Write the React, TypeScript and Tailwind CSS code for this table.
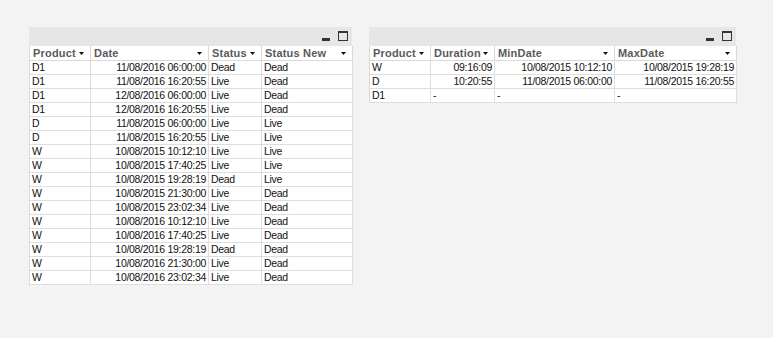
import React from "react";

const font = { fontFamily: '"Liberation Sans", Arial, sans-serif' };

function Arrow() {
  return (
    <svg width="5" height="3" viewBox="0 0 5 3" className="shrink-0">
      <path d="M0 0H5L2.5 3Z" fill="#111" />
    </svg>
  );
}

function Caption() {
  return (
    <div className="h-[19px] bg-[#e6e6e6] flex items-end justify-end gap-[8px] pr-[4px] pb-[4px]">
      <div className="w-[8px] h-[3px] bg-[#333] mb-[1px]" />
      <div className="w-[10px] h-[10px] border border-[#333] border-t-[2px] bg-transparent mb-[1px]" />
    </div>
  );
}

type Col = { title: string; align: "left" | "right" };

function Table({ cols, widths, rows }: { cols: Col[]; widths: string; rows: string[][] }) {
  return (
    <div className="flex flex-col" style={font}>
      <Caption />
      <div className={`grid ${widths} bg-white border-l border-[#d9d9d9]`}>
        {cols.map((c, i) => (
          <div
            key={"h" + i}
            className="h-[15px] border-r border-b border-[#d9d9d9] flex items-center justify-between pl-[3px] pr-[6px] text-[11px] font-bold tracking-[0.2px] text-[#5a5a5a] leading-none"
          >
            <span>{c.title}</span>
            <Arrow />
          </div>
        ))}
        {rows.map((r, ri) =>
          r.map((v, ci) => {
            const isDash = v === "-";
            const right = cols[ci].align === "right" && !isDash;
            return (
              <div
                key={ri + "-" + ci}
                className={`h-[14px] border-r border-b border-[#dedede] flex items-center px-[2px] text-[10.5px] tracking-[-0.3px] text-[#111] leading-none whitespace-nowrap ${
                  right ? "justify-end" : "justify-start"
                }`}
              >
                {v}
              </div>
            );
          })
        )}
      </div>
    </div>
  );
}

const leftRows = [
  ["D1", "11/08/2016 06:00:00", "Dead", "Dead"],
  ["D1", "11/08/2016 16:20:55", "Live", "Dead"],
  ["D1", "12/08/2016 06:00:00", "Live", "Dead"],
  ["D1", "12/08/2016 16:20:55", "Live", "Dead"],
  ["D", "11/08/2015 06:00:00", "Live", "Live"],
  ["D", "11/08/2015 16:20:55", "Live", "Live"],
  ["W", "10/08/2015 10:12:10", "Live", "Live"],
  ["W", "10/08/2015 17:40:25", "Live", "Live"],
  ["W", "10/08/2015 19:28:19", "Dead", "Live"],
  ["W", "10/08/2015 21:30:00", "Live", "Dead"],
  ["W", "10/08/2015 23:02:34", "Live", "Dead"],
  ["W", "10/08/2016 10:12:10", "Live", "Dead"],
  ["W", "10/08/2016 17:40:25", "Live", "Dead"],
  ["W", "10/08/2016 19:28:19", "Dead", "Dead"],
  ["W", "10/08/2016 21:30:00", "Live", "Dead"],
  ["W", "10/08/2016 23:02:34", "Live", "Dead"],
];

const rightRows = [
  ["W", "09:16:09", "10/08/2015 10:12:10", "10/08/2015 19:28:19"],
  ["D", "10:20:55", "11/08/2015 06:00:00", "11/08/2015 16:20:55"],
  ["D1", "-", "-", "-"],
];

export default function App() {
  return (
    <div className="w-[773px] h-[338px] bg-[#f3f3f3] flex items-start gap-[17px] pl-[29px] pt-[27px]">
      <div className="w-[323px]">
        <Table
          widths="grid-cols-[61px_118px_53px_91px]"
          cols={[
            { title: "Product", align: "left" },
            { title: "Date", align: "right" },
            { title: "Status", align: "left" },
            { title: "Status New", align: "left" },
          ]}
          rows={leftRows}
        />
      </div>
      <div className="w-[367px]">
        <Table
          widths="grid-cols-[61px_64px_120px_122px]"
          cols={[
            { title: "Product", align: "left" },
            { title: "Duration", align: "right" },
            { title: "MinDate", align: "right" },
            { title: "MaxDate", align: "right" },
          ]}
          rows={rightRows}
        />
      </div>
    </div>
  );
}
